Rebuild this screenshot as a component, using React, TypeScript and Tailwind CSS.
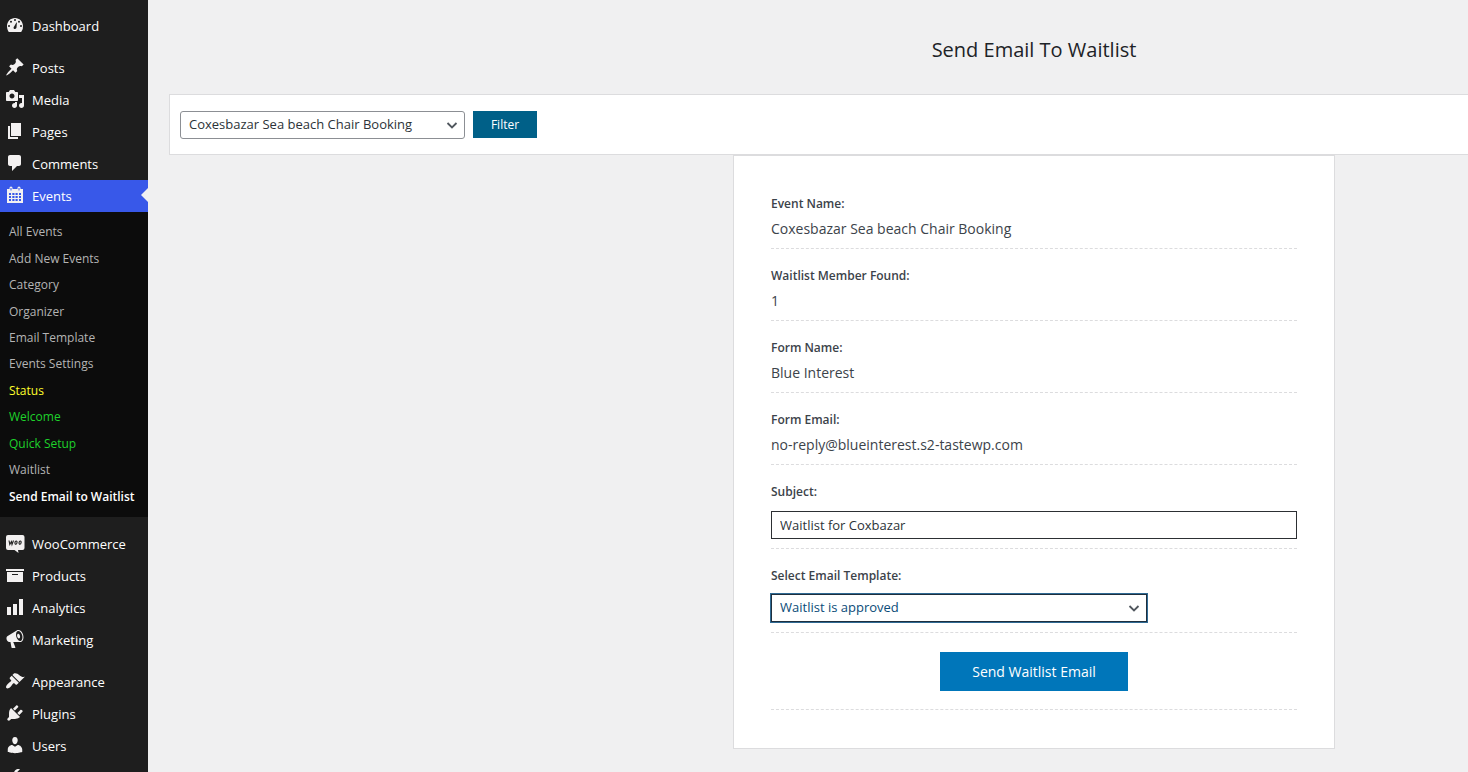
import type { ReactNode } from 'react'
import clsx from 'clsx'

type MenuItem = {
  label?: string
  icon: ReactNode
  active?: boolean
  spaced?: boolean
}

type SubmenuItem = {
  label: string
  tone?: string
}

const p = (d: string) => <path fillRule="evenodd" d={d} />

const icons = {
  dashboard: p(
    'M3.8 17h12.4A8 8 0 0 0 18 11c0-4.42-3.58-8-8-8s-8 3.58-8 8c0 2.2.66 4.4 1.8 6zM10 4a1 1 0 1 1 0 2 1 1 0 0 1 0-2zM6 5.8a1 1 0 1 1 0 2 1 1 0 0 1 0-2zm8 0a1 1 0 1 1 0 2 1 1 0 0 1 0-2zM4 10a1 1 0 1 1 0 2 1 1 0 0 1 0-2zm12 0a1 1 0 1 1 0 2 1 1 0 0 1 0-2zm-4.6-2.6.5.2-.4 5c-.1.900-.7 1.400-1.500 1.400s-1.500-.7-1.400-1.600c.1-.5.4-.9.700-1.100z'
  ),
  posts: p(
    'M10.44 3.02l1.82-1.82 6.36 6.35-1.83 1.82c-1.05-.68-2.48-.57-3.41.36l-.75.75c-.92.93-1.04 2.35-.35 3.41l-1.83 1.82-2.41-2.41-2.8 2.79c-.42.42-3.38 2.71-3.8 2.29s1.86-3.39 2.28-3.81l2.79-2.79L4.1 9.36l1.83-1.82c1.05.69 2.48.57 3.4-.36l.75-.75c.93-.92 1.05-2.35.36-3.41z'
  ),
  media: p(
    'M13 11V4c0-.55-.45-1-1-1h-1.67L9 1H5L3.67 3H2c-.55 0-1 .45-1 1v7c0 .55.45 1 1 1h10c.55 0 1-.45 1-1zM7 4.5c1.38 0 2.5 1.12 2.5 2.5S8.38 9.5 7 9.5 4.5 8.38 4.5 7 5.62 4.5 7 4.5zM14 6h5v10.5c0 1.38-1.12 2.5-2.5 2.5S14 17.88 14 16.5s1.12-2.5 2.5-2.5c.17 0 .34.02.5.05V9h-3V6zm-4 8.05V13h2v3.5c0 1.38-1.12 2.5-2.5 2.5S7 17.88 7 16.5 8.12 14 9.5 14c.17 0 .34.02.5.05z'
  ),
  pages: p('M6 15V2h10v13H6zm-1 1h8v2H3V5h2v11z'),
  comments: p('M5 2h9c1.1 0 2 .9 2 2v7c0 1.1-.9 2-2 2h-2l-5 5v-5H5c-1.1 0-2-.9-2-2V4c0-1.1.9-2 2-2z'),
  events: p(
    'M2 4h2.500V3a1.500 1.500 0 0 1 3 0v1h5V3a1.500 1.500 0 0 1 3 0v1H18v14H2zM5.500 3v2.500h1V3zm8 0v2.500h1V3zM4 8v2h2V8zm3.300 0v2h2.200V8zm3.200 0v2h2.200V8zM14 8v2h2V8zM4 11v2h2v-2zm3.300 0v2h2.200v-2zm3.200 0v2h2.200v-2zm3.500 0v2h2v-2zM4 14v2h2v-2zm3.300 0v2h2.200v-2zm3.200 0v2h2.200v-2zm3.500 0v2h2v-2z'
  ),
  woo: (
    <>
      {p('M3 2h14.5a2 2 0 0 1 2 2v11a2 2 0 0 1-2 2H13l.5 3-4-3H3a2 2 0 0 1-2-2V4a2 2 0 0 1 2-2z')}
      <path
        d="M4 7.500l.8 4L6.400 8.500l.6 3L8.500 7.500M11.200 8c-1.500 0-1.700 3.300-.4 3.300s1.800-3.300.4-3.300zM15.300 8c-1.500 0-1.700 3.300-.4 3.300s1.800-3.300.4-3.300z"
        fill="none"
        stroke="#1e1e1e"
        strokeWidth="1.1"
      />
    </>
  ),
  products: p('M19 4v2H1V4h18zM2 7h16v10H2V7zm11 3V9H7v1h6z'),
  analytics: p('M18 18V2h-4v16h4zm-6 0V7H8v11h4zm-6 0v-8H2v8h4z'),
  marketing: p(
    'M18.15 5.94c.46 1.62.38 3.22-.02 4.48-.42 1.28-1.26 2.18-2.3 2.48-.16.06-.26.06-.4.06-.06.02-.12.02-.18.02-.06.02-.14.02-.22.02h-6.8l2.22 5.5c.02.14-.06.26-.14.34-.08.1-.24.16-.34.16H6.95c-.1 0-.26-.06-.34-.16-.08-.08-.16-.2-.14-.34l-1-5.5H4.25l-.02-.02c-.5.06-1.08-.18-1.54-.62s-.88-1.08-1.06-1.88c-.24-.8-.2-1.56-.02-2.2.18-.62.58-1.08 1.06-1.3l.02-.02 9-5.4c.1-.06.18-.1.24-.16.06-.04.14-.08.24-.12.16-.08.28-.12.5-.18 1.04-.3 2.24.1 3.22.98s1.84 2.24 2.26 3.86zm-2.58 5.98h-.02c.4-.1.74-.34 1.04-.7.58-.7.86-1.76.86-3.04 0-.64-.1-1.3-.28-1.98-.34-1.36-1.02-2.5-1.78-3.24s-1.68-1.1-2.46-.88c-.82.22-1.4.96-1.7 2-.32 1.04-.28 2.36.06 3.72.38 1.36 1 2.5 1.8 3.24.78.74 1.62 1.1 2.48.88zm-2.54-7.08c.22-.04.42-.02.62.04.38.16.76.48 1.02 1s.42 1.2.42 1.78c0 .3-.04.56-.12.8-.18.48-.44.84-.86.94-.34.1-.8-.06-1.14-.4s-.64-.86-.78-1.5c-.18-.62-.12-1.24.02-1.72s.48-.84.82-.94z'
  ),
  appearance: p(
    'M14.48 11.06L7.41 3.99l1.5-1.5c.5-.56 2.3-.47 3.51.32 1.21.8 1.43 1.28 2.91 2.1 1.18.64 2.45 1.26 4.45.85zm-.71.71L6.7 4.7 4.93 6.47c-.39.39-.39 1.02 0 1.41l1.06 1.06c.39.39.39 1.03 0 1.42-.6.6-1.43 1.11-2.21 1.69-.35.26-.7.53-1.01.84C1.43 14.23.4 16.08 1.4 17.07c.99 1 2.84-.03 4.18-1.36.31-.31.58-.66.85-1.02.57-.78 1.08-1.61 1.69-2.21.39-.39 1.02-.39 1.41 0l1.06 1.06c.39.39 1.02.39 1.41 0z'
  ),
  plugins: p(
    'M13.11 4.36L9.87 7.6 8 5.73l3.24-3.24c.35-.34 1.05-.2 1.56.32.52.51.66 1.21.31 1.55zm-8 1.77l.91-1.12 9.01 9.01-1.19.84c-.71.71-2.63 1.16-3.82 1.16H6.14L4.9 17.26c-.59.59-1.54.59-2.12 0-.59-.58-.59-1.53 0-2.12l1.24-1.24v-3.88c0-1.13.4-3.19 1.09-3.89zm7.26 3.97l3.24-3.24c.34-.35 1.04-.21 1.55.31.52.51.66 1.21.31 1.55l-3.24 3.25z'
  ),
  users: p(
    'M10 9.25c-2.27 0-2.73-3.44-2.73-3.44C7 4.02 7.82 2 9.97 2c2.16 0 2.98 2.02 2.71 3.81 0 0-.41 3.44-2.68 3.44zm0 2.57L12.72 10c2.39 0 4.52 2.33 4.52 4.53v2.49s-3.65 1.13-7.24 1.13c-3.65 0-7.24-1.13-7.24-1.13v-2.49c0-2.25 1.94-4.48 4.47-4.48z'
  ),
  tools: p(
    'M16.68 9.77c-1.34 1.34-3.3 1.67-4.95.99l-5.41 6.52c-.99.99-2.59.99-3.58 0s-.99-2.59 0-3.57l6.52-5.42c-.68-1.65-.35-3.61.99-4.95 1.28-1.28 3.12-1.62 4.72-1.06l-2.89 2.89 2.82 2.82 2.86-2.87c.53 1.58.18 3.39-1.08 4.65z'
  ),
}

const topMenu: MenuItem[] = [
  { label: 'Dashboard', icon: icons.dashboard },
  { label: 'Posts', icon: icons.posts, spaced: true },
  { label: 'Media', icon: icons.media },
  { label: 'Pages', icon: icons.pages },
  { label: 'Comments', icon: icons.comments },
  { label: 'Events', icon: icons.events, active: true },
]

const submenu: SubmenuItem[] = [
  { label: 'All Events' },
  { label: 'Add New Events' },
  { label: 'Category' },
  { label: 'Organizer' },
  { label: 'Email Template' },
  { label: 'Events Settings' },
  { label: 'Status', tone: 'text-[#ffff2b]' },
  { label: 'Welcome', tone: 'text-[#1ed12b]' },
  { label: 'Quick Setup', tone: 'text-[#1ed12b]' },
  { label: 'Waitlist' },
  { label: 'Send Email to Waitlist', tone: 'font-semibold text-white' },
]

const bottomMenu: MenuItem[] = [
  { label: 'WooCommerce', icon: icons.woo },
  { label: 'Products', icon: icons.products },
  { label: 'Analytics', icon: icons.analytics },
  { label: 'Marketing', icon: icons.marketing },
  { label: 'Appearance', icon: icons.appearance, spaced: true },
  { label: 'Plugins', icon: icons.plugins },
  { label: 'Users', icon: icons.users },
  { icon: icons.tools },
]

const details = [
  { label: 'Event Name:', value: 'Coxesbazar Sea beach Chair Booking' },
  { label: 'Waitlist Member Found:', value: '1' },
  { label: 'Form Name:', value: 'Blue Interest' },
  { label: 'Form Email:', value: 'no-reply@blueinterest.s2-tastewp.com' },
]

const MenuList = ({ items }: { items: MenuItem[] }) => (
  <ul>
    {items.map((item, i) => (
      <li key={i} className={clsx(item.spaced && 'mt-[10px]')}>
        <a
          href="#"
          className={clsx(
            'relative flex h-8 items-center gap-[7px] pt-[2px] pl-[5px] text-[13px] text-white',
            item.active && 'bg-[#3858e9]'
          )}
        >
          <svg viewBox="0 0 20 20" className="mb-[5px] size-5 shrink-0 fill-[#f3f1f1]" aria-hidden="true">
            {item.icon}
          </svg>
          {item.label}
          {item.active && (
            <span className="absolute right-0 top-2 border-y-[7px] border-r-[7px] border-y-transparent border-r-[#f0f0f1]" />
          )}
        </a>
      </li>
    ))}
  </ul>
)

const Sidebar = () => (
  <nav className="w-[148px] shrink-0 bg-[#1e1e1e] pt-[10px]">
    <MenuList items={topMenu} />
    <ul className="mb-[11px] grid h-[305px] auto-rows-fr bg-[#0c0c0c] py-[7px]">
      {submenu.map((item) => (
        <li key={item.label} className="flex items-center">
          <a href="#" className={clsx('pl-[9px] text-[12px] leading-4 whitespace-nowrap', item.tone ?? 'text-[#b4b4b4]')}>
            {item.label}
          </a>
        </li>
      ))}
    </ul>
    <MenuList items={bottomMenu} />
  </nav>
)

const Chevron = () => (
  <svg
    viewBox="0 0 12 12"
    className="pointer-events-none absolute right-[7px] top-2 size-3 fill-none stroke-[#50575e] stroke-[1.8]"
    aria-hidden="true"
  >
    <path d="M1.5 4L6 8.500 10.500 4" />
  </svg>
)

const FilterBar = () => (
  <form className="flex items-start gap-2 border border-[#dcdcde] bg-white px-[10px] pt-4 pb-[15px]">
    <div className="relative w-[285px]">
      <select
        aria-label="Event"
        className="block h-7 w-full appearance-none rounded-[3px] border border-[#8c8f94] bg-white pl-2 text-[13px] text-[#2c3338]"
      >
        <option>Coxesbazar Sea beach Chair Booking</option>
      </select>
      <Chevron />
    </div>
    <button type="button" className="h-[27px] w-16 bg-[#006088] text-[12px] text-white">
      Filter
    </button>
  </form>
)

const labelClass = 'block text-[12px] leading-5 font-semibold'
const rowClass = 'border-b border-dashed border-[#dcdcde]'

const EmailForm = () => (
  <form className="mx-auto flex w-[602px] flex-col gap-[17px] border border-[#dcdcde] bg-white px-[37px] py-[38px] text-[#3c434a]">
    {details.map((row) => (
      <div key={row.label} className={clsx(rowClass, 'pb-[7px]')}>
        <h2 className={labelClass}>{row.label}</h2>
        <p className="mt-[3px] text-[14px] leading-6">{row.value}</p>
      </div>
    ))}

    <div className={clsx(rowClass, 'pb-[9px]')}>
      <label htmlFor="subject" className={labelClass}>
        Subject:
      </label>
      <input
        id="subject"
        type="text"
        defaultValue="Waitlist for Coxbazar"
        className="mt-[9px] block h-7 w-full border border-[#2c2f33] bg-white px-2 text-[13px] text-[#2c3338]"
      />
    </div>

    <div className={clsx(rowClass, 'pb-[10px]')}>
      <label htmlFor="template" className={labelClass}>
        Select Email Template:
      </label>
      <div className="relative mt-2 w-[376px]">
        <select
          id="template"
          className="block h-7 w-full appearance-none border border-[#1e2f3e] bg-white px-2 text-[13px] text-[#0a4b78] ring-1 ring-[#2f6a94]"
        >
          <option>Waitlist is approved</option>
        </select>
        <Chevron />
      </div>
    </div>

    <div className={clsx(rowClass, 'flex justify-center pt-[2px] pb-[18px]')}>
      <button type="button" className="h-[39px] w-[188px] bg-[#0076ba] text-[14px] text-white">
        Send Waitlist Email
      </button>
    </div>
  </form>
)

export default function App() {
  return (
    <div className="flex h-screen overflow-hidden bg-[#f0f0f1] font-['Open_Sans','Noto_Sans',sans-serif]">
      <Sidebar />
      <main className="min-w-0 flex-1 overflow-hidden pl-[21px]">
        {/* wide admin canvas, clipped on narrower windows */}
        <div className="min-w-[1730px]">
          <h1 className="pt-[34px] pb-7 text-center text-[20px] leading-8 text-[#1d2327]">Send Email To Waitlist</h1>
          <FilterBar />
          <EmailForm />
        </div>
      </main>
    </div>
  )
}
